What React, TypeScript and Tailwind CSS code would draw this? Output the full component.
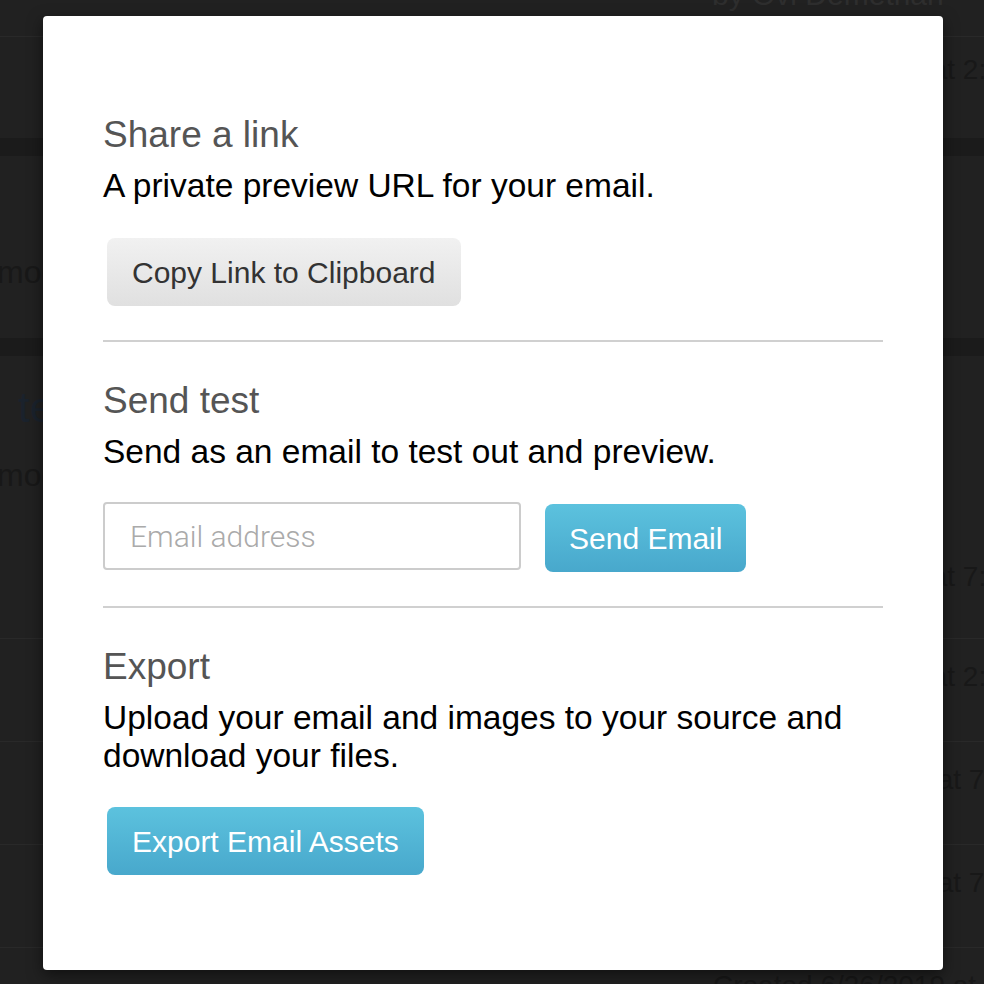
import { useState } from "react";

const font = "font-['Liberation_Sans',Arial,sans-serif]";

function DateRow({ text, indent, border = true }: { text: string; indent: string; border?: boolean }) {
  return (
    <div className={`h-[103px] pt-[22px] ${indent} ${border ? "border-b border-[#292929]" : ""}`}>
      <span className="block whitespace-nowrap text-[28px] leading-[32px] text-[#181818]">{text}</span>
    </div>
  );
}

function Background() {
  return (
    <div className={`h-[984px] w-full overflow-hidden bg-[#212121] ${font}`}>
      {/* header */}
      <div className="flow-root h-[37px] border-b border-[#292929] pl-[712px]">
        <span className="-mt-[22px] block whitespace-nowrap text-[30px] leading-[34px] text-[#2e2e2e]">
          by Ovi Demetrian
        </span>
      </div>
      <div className="h-[101px] pl-[692px] pt-[17px]">
        <span className="block whitespace-nowrap text-[28px] leading-[32px] text-[#181818]">
          Created 6/28/2019 at 2:14 PM
        </span>
      </div>
      <div className="h-[18px] bg-[#1b1b1b]" />

      {/* card 1 */}
      <div className="h-[182px] pt-[98px]">
        <span className="-ml-[3px] block whitespace-nowrap text-[32px] leading-[36px] text-[#181818]">
          modified 2 days ago
        </span>
      </div>
      <div className="h-[18px] bg-[#1b1b1b]" />

      {/* card 2 */}
      <div className="h-[283px] border-b border-[#292929] pt-[28px]">
        <span className="ml-[18px] block whitespace-nowrap text-[42px] leading-[48px] text-[#1a222c]">
          test email
        </span>
        <span className="-ml-[3px] mt-[25px] block whitespace-nowrap text-[32px] leading-[36px] text-[#181818]">
          modified 3 days ago
        </span>
        <span className="ml-[692px] mt-[68px] block whitespace-nowrap text-[28px] leading-[32px] text-[#181818]">
          Created 6/27/2019 at 7:21 PM
        </span>
      </div>
      <DateRow text="Created 6/26/2019 at 2:40 PM" indent="pl-[692px]" />
      <DateRow text="Created 6/26/2019 at 7:05 PM" indent="pl-[698px]" />
      <DateRow text="Created 6/26/2019 at 7:02 PM" indent="pl-[698px]" />
      <DateRow text="Created 6/26/2019 at 4:55 PM" indent="pl-[713px]" border={false} />
    </div>
  );
}

function Section({
  title,
  description,
  children,
  first = false,
}: {
  title: string;
  description: React.ReactNode;
  children: React.ReactNode;
  first?: boolean;
}) {
  return (
    <section className={first ? "" : "pt-[39px]"}>
      <h2 className="text-[37px] leading-[40px] text-[#555]">{title}</h2>
      <p className="mt-[12px] text-[33.5px] leading-[38px] text-black">{description}</p>
      {children}
    </section>
  );
}

export default function App() {
  const [email, setEmail] = useState("");

  return (
    <div className="relative">
      <Background />

      {/* modal */}
      <div className={`absolute inset-0 flex justify-center pl-[2px] pt-[16px] ${font}`}>
        <div className="h-[954px] w-[900px] rounded-[4px] bg-white px-[60px] pt-[99px] shadow-[0_5px_15px_rgba(0,0,0,0.5)]">
          <Section first title="Share a link" description="A private preview URL for your email.">
            <button className="ml-[4px] mt-[33px] h-[68px] cursor-pointer rounded-[8px] bg-linear-to-b from-[#f1f1f1] to-[#e0e0e0] px-[25px] text-[30px] text-[#333]">
              Copy Link to Clipboard
            </button>
          </Section>

          <div className="mt-[34px] h-[2px] bg-[#d0d0d0]" />

          <Section title="Send test" description="Send as an email to test out and preview.">
            <div className="mt-[31px] flex items-start gap-[24px]">
              <input
                value={email}
                onChange={(e) => setEmail(e.target.value)}
                placeholder="Email address"
                className="h-[68px] w-[418px] rounded-[4px] border-2 border-[#cccccc] bg-white px-[25px] font-['Roboto',sans-serif] text-[30px] font-light text-[#333] outline-none placeholder:text-[#aaaaaa]"
              />
              <button className="mt-[2px] h-[68px] cursor-pointer rounded-[8px] bg-linear-to-b from-[#5cc2de] to-[#48a8cc] px-[24px] text-[30px] text-white">
                Send Email
              </button>
            </div>
          </Section>

          <div className="mt-[34px] h-[2px] bg-[#d0d0d0]" />

          <Section
            title="Export"
            description="Upload your email and images to your source and download your files."
          >
            <button className="ml-[4px] mt-[32px] h-[68px] cursor-pointer rounded-[8px] bg-linear-to-b from-[#5cc2de] to-[#48a8cc] px-[25px] text-[30px] text-white">
              Export Email Assets
            </button>
          </Section>
        </div>
      </div>
    </div>
  );
}
